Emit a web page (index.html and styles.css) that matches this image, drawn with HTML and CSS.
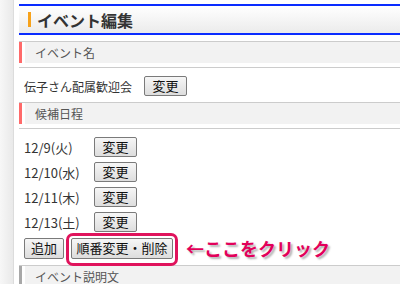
FILE: index.html
```html
<!DOCTYPE html>
<html lang="ja">
<head>
  <meta charset="UTF-8" />
  <title>イベント編集</title>
  <link rel="stylesheet" href="styles.css">
</head>
<body>
  <div class="page">
    <div class="side"></div>
    <div class="main">
      <h1 class="title"><span class="mark"></span>イベント編集</h1>

      <div class="sec">
        <div class="sec-head"><span class="label">イベント名</span></div>
      </div>
      <div class="sec-body">
        <div class="row">
          <span class="name">伝子さん配属歓迎会</span>
          <button class="btn">変更</button>
        </div>
      </div>

      <div class="sec">
        <div class="sec-head"><span class="label">候補日程</span></div>
      </div>
      <div class="sec-body">
        <div class="row date"><span class="day">12/9(火)</span><button class="btn">変更</button></div>
        <div class="row date"><span class="day">12/10(水)</span><button class="btn">変更</button></div>
        <div class="row date"><span class="day">12/11(木)</span><button class="btn">変更</button></div>
        <div class="row date"><span class="day">12/13(土)</span><button class="btn">変更</button></div>
        <div class="row actions">
          <button class="btn">追加</button>
          <button class="btn wide marked">順番変更・削除</button>
          <span class="hint">←ここをクリック</span>
        </div>
      </div>

      <div class="sec last">
        <div class="sec-head"><span class="label">イベント説明文</span></div>
      </div>
    </div>
  </div>
</body>
</html>
```

FILE: styles.css
```css
body {
  margin: 0;
  font-family: "Noto Sans CJK JP", "Noto Sans", sans-serif;
  color: #333;
  background: #fff;
  overflow: hidden;
}

.page {
  display: flex;
  height: 284px;
  overflow: hidden;
}

.side {
  width: 13px;
  flex: none;
  background: linear-gradient(to right, #f7f7f7, #e9e9e9);
  border-right: 1px solid #dcdcdc;
}

.main {
  flex: 1;
  padding-left: 5px;
  padding-top: 4px;
}

.title {
  margin: 0;
  height: 27px;
  border-top: 2px solid #0a2cff;
  border-bottom: 2px solid #0a2cff;
  background: linear-gradient(#ffffff, #ebebeb);
  display: flex;
  align-items: center;
  font-size: 16px;
  font-weight: bold;
  color: #333;
}

.mark {
  width: 3px;
  height: 15px;
  background: #f7a21b;
  margin: 0 6px 0 9px;
}

.sec {
  margin-top: 6px;
  border-top: 1px solid #cccccc;
  border-bottom: 1px solid #cccccc;
  padding-bottom: 4px;
}

.sec-head {
  border-left: 3px solid #ff6a6a;
  display: flex;
}

.sec-head .label {
  flex: 1;
  margin-left: 3px;
  height: 21px;
  line-height: 21px;
  background: #f2f2f2;
  padding-left: 10px;
  font-size: 12px;
  color: #555;
}

.sec.last {
  border-bottom: none;
}

.sec.last .sec-head {
  border-left-color: #a8a8a8;
}

.sec-body {
  padding: 8px 0 0 5px;
  font-size: 12px;
}

.row {
  display: flex;
  align-items: center;
  height: 20px;
  margin-bottom: 5px;
}

.name {
  width: 120px;
}

.day {
  width: 70px;
  font-size: 13px;
}

.btn {
  font-family: inherit;
  font-size: 13px;
  color: #111;
  height: 20px;
  width: 43px;
  padding: 0;
  border: 1px solid #7a7a7a;
  border-radius: 2px;
  background: linear-gradient(#f6f6f6, #dddddd);
  line-height: 18px;
}

.row.actions {
  margin-top: 2px;
  height: 22px;
}

.row.actions .btn {
  height: 21px;
  width: 40px;
}

.row.actions .btn.wide {
  width: 102px;
  margin-left: 7px;
}

.marked {
  position: relative;
}

.marked::after {
  content: "";
  position: absolute;
  left: -6px;
  right: -6px;
  top: -6px;
  bottom: -8px;
  border: 3px solid #e0135c;
  border-radius: 7px;
}

.hint {
  margin-left: 13px;
  font-size: 18px;
  font-weight: bold;
  color: #e2005a;
  text-shadow: 2px 2px 2px rgba(0, 0, 0, 0.3);
}
```
